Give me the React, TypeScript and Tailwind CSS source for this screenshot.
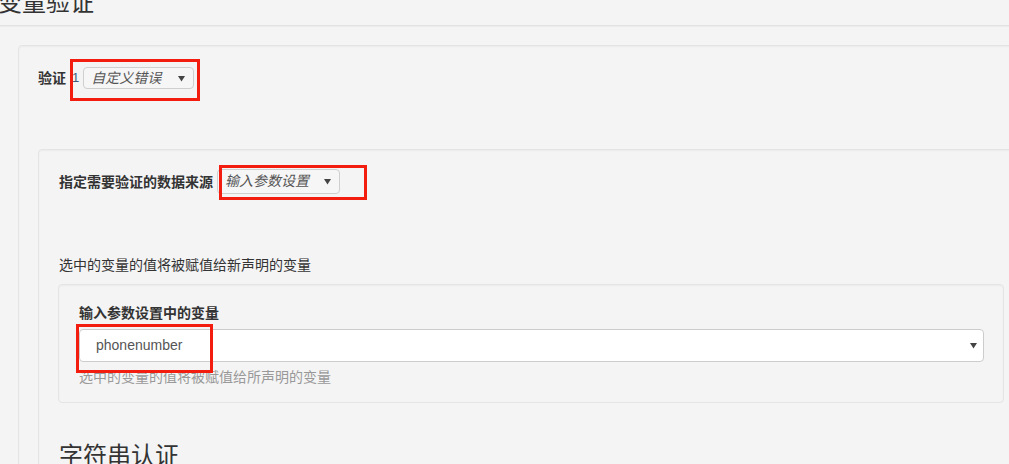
import { ReactNode } from "react";

function Caret({ className = "" }: { className?: string }) {
  return (
    <svg className={className} width="7" height="7" viewBox="0 0 7 7" aria-hidden="true">
      <path d="M0 1h7L3.5 6.5z" fill="#444" />
    </svg>
  );
}

function InlineSelect({ value, width, height }: { value: string; width: string; height: string }) {
  return (
    <div
      className={`flex items-center justify-between rounded-[4px] border border-[#cfcfcf] bg-[#f6f6f6] pl-[7px] pr-[8px] text-[14px] italic text-[#555] ${width} ${height}`}
    >
      <span>{value}</span>
      <Caret />
    </div>
  );
}

function Mark({ className }: { className: string }) {
  return <div className={`pointer-events-none absolute border-[3px] border-[#f21c0f] ${className}`} />;
}

function Panel({ children, className = "" }: { children: ReactNode; className?: string }) {
  return (
    <div className={`rounded-[4px] border border-[#e4e4e4] shadow-[inset_0_1px_2px_rgba(0,0,0,0.04)] ${className}`}>
      {children}
    </div>
  );
}

export default function App() {
  return (
    <div
      className="relative h-[464px] w-[1009px] overflow-hidden bg-[#f4f4f4] text-[#333]"
      style={{ fontFamily: '"Liberation Sans", "Noto Sans CJK SC", sans-serif' }}
    >
      <div className="h-[26px] overflow-hidden border-b border-[#e2e2e2] shadow-[0_1px_1px_rgba(0,0,0,0.03)]">
        <h1 className="-ml-[2px] -mt-[13px] text-[24px] font-normal leading-[32px] text-[#333]">变量验证</h1>
      </div>

      <Panel className="ml-[18px] mt-[19px] -mr-[40px] pl-[19px] pt-[21px]">
        <div className="flex h-[22px] items-center">
          <span className="text-[14px] font-bold leading-[18px]">验证</span>
          <span className="ml-[6px] text-[13px] leading-[18px] text-[#3d5a78]">1</span>
          <div className="ml-[4px]">
            <InlineSelect value="自定义错误" width="w-[111px]" height="h-[22px]" />
          </div>
        </div>

        <Panel className="mt-[60px] pl-[20px] pr-[20px] pt-[19px]">
          <div className="flex h-[25px] items-center gap-[4px]">
            <span className="text-[14px] font-bold leading-[18px]">指定需要验证的数据来源</span>
            <InlineSelect value="输入参数设置" width="w-[123px]" height="h-[25px]" />
          </div>

          <p className="mt-[62px] text-[14px] leading-[18px]">选中的变量的值将被赋值给新声明的变量</p>

          <Panel className="mt-[10px] w-[946px] -ml-[1px] px-[20px] pb-[16px] pt-[19px]">
            <div className="text-[14px] font-bold leading-[18px]">输入参数设置中的变量</div>
            <div className="mt-[7px] flex h-[33px] w-[905px] items-center justify-between rounded-[4px] border border-[#cccccc] bg-white pl-[16px] pr-[6px] text-[14px] text-[#555]">
              <span>phonenumber</span>
              <Caret />
            </div>
            <p className="mt-[6px] text-[14px] leading-[18px] text-[#999]">选中的变量的值将被赋值给所声明的变量</p>
          </Panel>

          <h2 className="mt-[37px] text-[24px] font-normal leading-[32px] text-[#333]">字符串认证</h2>
        </Panel>
      </Panel>

      <Mark className="left-[70px] top-[59px] h-[42px] w-[130px]" />
      <Mark className="left-[219px] top-[165px] h-[35px] w-[148px]" />
      <Mark className="left-[76px] top-[324px] h-[49px] w-[137px]" />
    </div>
  );
}
